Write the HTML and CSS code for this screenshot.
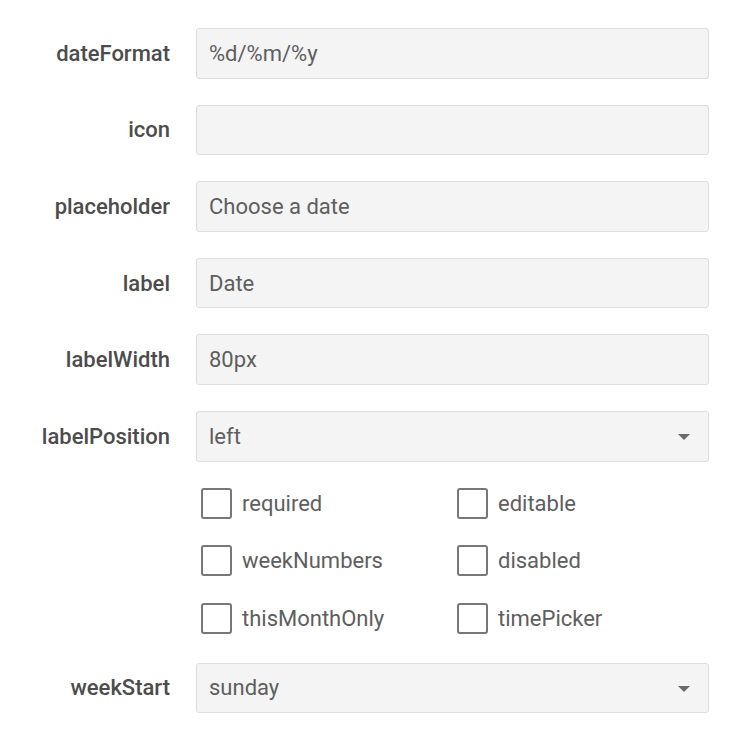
FILE: index.html
```html
<!DOCTYPE html>
<html>
<head>
<meta charset="utf-8">
<link rel="stylesheet" href="styles.css">
</head>
<body>
<div class="form">
  <div class="row"><div class="label">dateFormat</div><div class="field">%d/%m/%y</div></div>
  <div class="row"><div class="label">icon</div><div class="field"></div></div>
  <div class="row"><div class="label">placeholder</div><div class="field">Choose a date</div></div>
  <div class="row"><div class="label">label</div><div class="field">Date</div></div>
  <div class="row"><div class="label">labelWidth</div><div class="field">80px</div></div>
  <div class="row"><div class="label">labelPosition</div><div class="field select">left<span class="arrow"></span></div></div>
  <div class="checks">
    <div class="check"><span class="box"></span><span class="ctext">required</span></div>
    <div class="check"><span class="box"></span><span class="ctext">editable</span></div>
    <div class="check"><span class="box"></span><span class="ctext">weekNumbers</span></div>
    <div class="check"><span class="box"></span><span class="ctext">disabled</span></div>
    <div class="check"><span class="box"></span><span class="ctext">thisMonthOnly</span></div>
    <div class="check"><span class="box"></span><span class="ctext">timePicker</span></div>
  </div>
  <div class="row last"><div class="label">weekStart</div><div class="field select">sunday<span class="arrow"></span></div></div>
</div>
</body>
</html>
```
FILE: styles.css
```css
html, body {
  margin: 0;
  padding: 0;
  background: #ffffff;
}
body {
  font-family: Roboto, "Liberation Sans", sans-serif;
  font-size: 22px;
}
.form {
  display: flex;
  flex-direction: column;
  gap: 26.6px;
  padding-top: 28px;
  width: 710px;
}
.row {
  display: grid;
  grid-template-columns: 170px 513px;
  column-gap: 26px;
  height: 50px;
  align-items: center;
}
.row.last {
  margin-top: 2.4px;
}
.label {
  text-align: right;
  font-weight: 500;
  color: #4c4c4c;
}
.field {
  box-sizing: border-box;
  height: 50.6px;
  border: 1px solid #dddddd;
  border-radius: 3px;
  background: #f4f4f4;
  padding: 0 12px;
  display: flex;
  align-items: center;
  color: #5e5e5e;
  position: relative;
}
.select .arrow {
  position: absolute;
  right: 18px;
  top: 50%;
  margin-top: -2px;
  width: 0;
  height: 0;
  border-left: 6px solid transparent;
  border-right: 6px solid transparent;
  border-top: 6px solid #6a6a6a;
}
.checks {
  margin-left: 196px;
  width: 513px;
  display: grid;
  grid-template-columns: 256px 257px;
  row-gap: 26.3px;
  margin-top: 0.4px;
}
.check {
  display: flex;
  align-items: center;
  height: 31px;
  padding-left: 5px;
  gap: 10px;
  color: #5e5e5e;
}
.box {
  box-sizing: border-box;
  width: 31px;
  height: 31px;
  border: 2px solid #777777;
  border-radius: 3px;
  background: #ffffff;
  flex: none;
}
```
